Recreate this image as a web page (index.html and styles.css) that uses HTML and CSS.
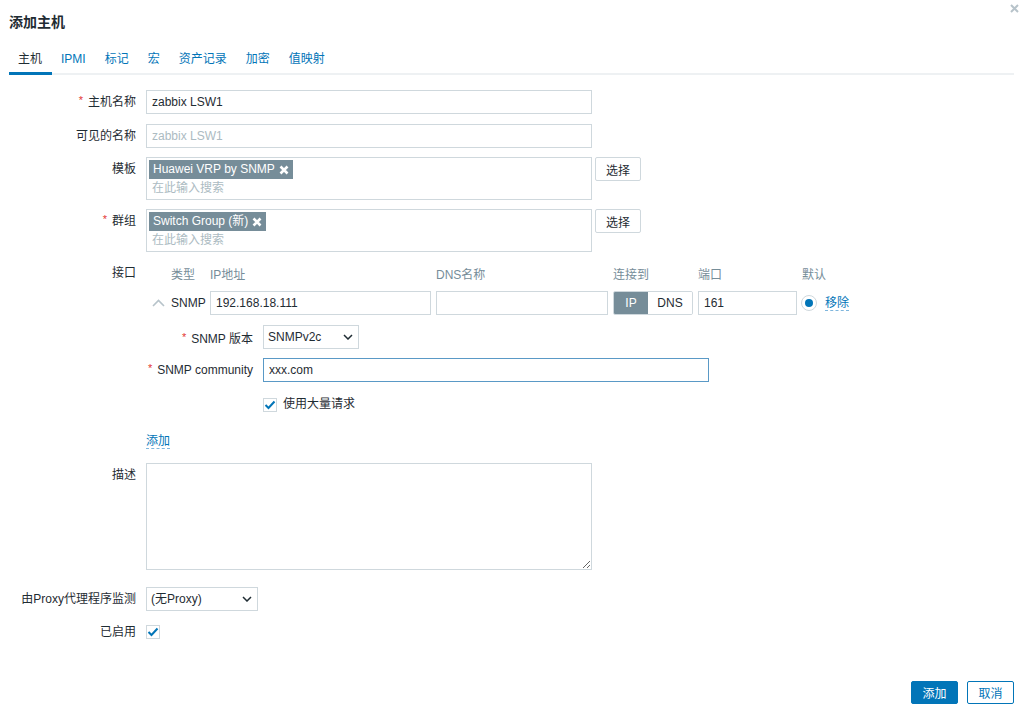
FILE: index.html
```html
<!DOCTYPE html>
<html lang="zh-CN">
<head>
    <meta charset="UTF-8">
    <meta name="viewport" content="width=device-width, initial-scale=1.0">
    <title>添加主机</title>
    <link rel="stylesheet" href="styles.css">
</head>
<body>
    <div class="dialog">
        <div class="dialog-head">
            <h4 class="dialog-title">添加主机</h4>
            <span class="dialog-close">
                <svg width="9" height="9" viewBox="0 0 9 9"><path d="M1 1L8 8M8 1L1 8" stroke="#b7c3ca" stroke-width="2"/></svg>
            </span>
        </div>

        <ul class="tabs">
            <li class="tab active">主机</li>
            <li class="tab">IPMI</li>
            <li class="tab">标记</li>
            <li class="tab">宏</li>
            <li class="tab">资产记录</li>
            <li class="tab">加密</li>
            <li class="tab">值映射</li>
        </ul>

        <div class="form">
            <div class="form-row first">
                <label class="form-label required">主机名称</label>
                <div class="form-field"><input class="text-input wide" type="text" value="zabbix LSW1"></div>
            </div>

            <div class="form-row">
                <label class="form-label">可见的名称</label>
                <div class="form-field"><input class="text-input wide" type="text" placeholder="zabbix LSW1"></div>
            </div>

            <div class="form-row">
                <label class="form-label">模板</label>
                <div class="form-field">
                    <div class="multiselect">
                        <span class="tag">Huawei VRP by SNMP
                            <svg width="10" height="10" viewBox="0 0 10 10"><path d="M1.5 1.5L8.5 8.5M8.5 1.5L1.5 8.5" stroke="#fff" stroke-width="2.6"/></svg>
                        </span>
                        <span class="ms-search">在此输入搜索</span>
                    </div>
                    <button class="btn-alt">选择</button>
                </div>
            </div>

            <div class="form-row">
                <label class="form-label required">群组</label>
                <div class="form-field">
                    <div class="multiselect">
                        <span class="tag">Switch Group (新)
                            <svg width="10" height="10" viewBox="0 0 10 10"><path d="M1.5 1.5L8.5 8.5M8.5 1.5L1.5 8.5" stroke="#fff" stroke-width="2.6"/></svg>
                        </span>
                        <span class="ms-search">在此输入搜索</span>
                    </div>
                    <button class="btn-alt">选择</button>
                </div>
            </div>

            <div class="form-row interfaces-row">
                <label class="form-label">接口</label>
                <div class="form-field interfaces">
                    <div class="iface-grid iface-head">
                        <span></span>
                        <span>类型</span>
                        <span>IP地址</span>
                        <span>DNS名称</span>
                        <span>连接到</span>
                        <span>端口</span>
                        <span>默认</span>
                    </div>
                    <div class="iface-grid iface-line">
                        <span class="chevron">
                            <svg width="13" height="8" viewBox="0 0 13 8"><path d="M1 7L6.5 1.5L12 7" fill="none" stroke="#b7c3ca" stroke-width="1.6"/></svg>
                        </span>
                        <span class="iface-type">SNMP</span>
                        <input class="text-input" type="text" value="192.168.18.111">
                        <input class="text-input" type="text" value="">
                        <div class="toggle">
                            <span class="toggle-opt on">IP</span>
                            <span class="toggle-opt">DNS</span>
                        </div>
                        <input class="text-input" type="text" value="161">
                        <div class="iface-default">
                            <span class="radio"><span class="radio-dot"></span></span>
                            <a class="link">移除</a>
                        </div>
                    </div>

                    <div class="snmp-details">
                        <div class="detail-row">
                            <label class="detail-label required">SNMP 版本</label>
                            <div class="select-wrap version">
                                <select class="select"><option>SNMPv2c</option></select>
                                <svg class="select-arrow" width="10" height="6" viewBox="0 0 10 6"><path d="M1 1L5 5L9 1" fill="none" stroke="#1f2c33" stroke-width="1.5"/></svg>
                            </div>
                        </div>
                        <div class="detail-row">
                            <label class="detail-label required">SNMP community</label>
                            <input class="text-input wide focused" type="text" value="xxx.com">
                        </div>
                        <div class="detail-row check-row">
                            <span class="detail-label"></span>
                            <span class="checkbox">
                                <svg width="12" height="10" viewBox="0 0 12 10"><path d="M1.5 5L4.5 8L10.5 1.5" fill="none" stroke="#0275b8" stroke-width="2"/></svg>
                            </span>
                            <span class="check-text">使用大量请求</span>
                        </div>
                    </div>
                </div>
            </div>

            <div class="form-row add-row">
                <span class="form-label"></span>
                <div class="form-field"><a class="link">添加</a></div>
            </div>

            <div class="form-row desc-row">
                <label class="form-label">描述</label>
                <div class="form-field"><textarea class="textarea"></textarea></div>
            </div>

            <div class="form-row">
                <label class="form-label">由Proxy代理程序监测</label>
                <div class="form-field">
                    <div class="select-wrap proxy">
                        <select class="select"><option>(无Proxy)</option></select>
                        <svg class="select-arrow" width="10" height="6" viewBox="0 0 10 6"><path d="M1 1L5 5L9 1" fill="none" stroke="#1f2c33" stroke-width="1.5"/></svg>
                    </div>
                </div>
            </div>

            <div class="form-row">
                <label class="form-label">已启用</label>
                <div class="form-field">
                    <span class="checkbox">
                        <svg width="12" height="10" viewBox="0 0 12 10"><path d="M1.5 5L4.5 8L10.5 1.5" fill="none" stroke="#0275b8" stroke-width="2"/></svg>
                    </span>
                </div>
            </div>
        </div>

        <div class="dialog-foot">
            <button class="btn-primary">添加</button>
            <button class="btn-cancel">取消</button>
        </div>
    </div>
</body>
</html>
```

FILE: styles.css
```css
* {
    margin: 0;
    padding: 0;
    box-sizing: border-box;
}

body {
    font-family: "Liberation Sans", Arial, "Noto Sans CJK SC", sans-serif;
    font-size: 12px;
    color: #1f2c33;
    background: #fff;
}

.dialog {
    width: 1024px;
    height: 712px;
    padding: 0 10px 8px 9px;
    display: flex;
    flex-direction: column;
}

.dialog-head {
    height: 45px;
    display: flex;
    justify-content: space-between;
    align-items: flex-start;
}

.dialog-title {
    margin-top: 13px;
    font-size: 14px;
    line-height: 18px;
    font-weight: bold;
    color: #1f2c33;
}

.dialog-close {
    margin: 4px -5px 0 0;
    display: flex;
}

/* tabs */
.tabs {
    list-style: none;
    display: flex;
    border-bottom: 2px solid #eef1f3;
}

.tab {
    padding: 7px 10px 6px 9px;
    line-height: 14px;
    color: #0275b8;
    border-bottom: 3px solid transparent;
    margin-bottom: -2px;
}

.tab.active {
    color: #1f2c33;
    border-bottom-color: #0275b8;
}

/* form */
.form {
    padding-top: 15px;
}

.form-row {
    display: flex;
    margin-bottom: 9px;
}

.form-row.first {
    margin-bottom: 10px;
}

.form-label {
    width: 127px;
    flex-shrink: 0;
    margin-right: 10px;
    text-align: right;
    line-height: 24px;
    white-space: nowrap;
}

.required::before {
    content: "*";
    color: #e33734;
    font-size: 11px;
    margin-right: 5px;
    position: relative;
    top: -2px;
}

.form-field {
    display: flex;
    align-items: flex-start;
}

.text-input {
    height: 24px;
    border: 1px solid #cfd8dd;
    padding: 0 5px;
    font: inherit;
    color: #1f2c33;
    background: #fff;
    outline: none;
    width: 100%;
}

.text-input.wide {
    width: 446px;
}

.text-input.focused {
    border-color: #5a99c6;
}

.text-input::placeholder {
    color: #acbbc2;
}

.multiselect {
    width: 446px;
    height: 43px;
    border: 1px solid #cfd8dd;
    padding: 2px;
    display: flex;
    flex-direction: column;
    align-items: flex-start;
}

.tag {
    height: 19px;
    line-height: 19px;
    padding: 0 4px;
    background: #768d99;
    color: #fff;
    display: inline-flex;
    align-items: center;
    gap: 4px;
    white-space: nowrap;
}

.ms-search {
    line-height: 19px;
    padding-left: 3px;
    color: #acbbc2;
}

.btn-alt {
    margin-left: 3px;
    width: 46px;
    height: 24px;
    border: 1px solid #cfd8dd;
    border-radius: 2px;
    background: #fff;
    font: inherit;
    color: #1f2c33;
}

/* interfaces */
.interfaces {
    flex-direction: column;
    padding-bottom: 6px;
}

.iface-grid {
    display: grid;
    grid-template-columns: 20px 34px 221px 172px 80px 99px auto;
    column-gap: 5px;
    align-items: center;
}

.iface-head {
    height: 24px;
    margin-bottom: 6px;
    color: #768d99;
}

.iface-line {
    height: 24px;
}

.chevron {
    display: flex;
    justify-content: center;
    padding-left: 5px;
}

.toggle {
    display: flex;
    height: 24px;
    border: 1px solid #cfd8dd;
    border-radius: 2px;
    overflow: hidden;
}

.toggle-opt {
    flex: 1;
    display: flex;
    align-items: center;
    justify-content: center;
    background: #fff;
}

.toggle-opt.on {
    flex: 0 0 34px;
    background: #768d99;
    color: #fff;
}

.iface-default {
    display: flex;
    align-items: center;
    gap: 8px;
    margin-left: -1px;
}

.radio {
    width: 16px;
    height: 16px;
    border: 1px solid #cfd8dd;
    border-radius: 50%;
    display: flex;
    align-items: center;
    justify-content: center;
}

.radio-dot {
    width: 8px;
    height: 8px;
    border-radius: 50%;
    background: #0275b8;
}

.link {
    color: #0275b8;
    border-bottom: 1px dashed #7fb6dd;
    line-height: 14px;
    cursor: pointer;
}

.snmp-details {
    margin-top: 10px;
}

.detail-row {
    display: flex;
    align-items: center;
    margin-bottom: 9px;
}

.detail-row.check-row {
    margin: -1px 0 0;
    height: 24px;
}

.detail-label {
    width: 107px;
    flex-shrink: 0;
    margin-right: 10px;
    text-align: right;
    white-space: nowrap;
}

.select-wrap {
    position: relative;
    height: 24px;
}

.select-wrap.version {
    width: 96px;
}

.select-wrap.proxy {
    width: 112px;
}

.select {
    appearance: none;
    width: 100%;
    height: 24px;
    border: 1px solid #cfd8dd;
    background: #fff;
    font: inherit;
    color: #1f2c33;
    padding: 0 4px;
    border-radius: 0;
}

.select-arrow {
    position: absolute;
    right: 6px;
    top: 9px;
}

.checkbox {
    width: 14px;
    height: 14px;
    border: 1px solid #cfd8dd;
    display: flex;
    align-items: center;
    justify-content: center;
    flex-shrink: 0;
}

.check-text {
    margin-left: 6px;
}

.form-field .checkbox {
    margin-top: 5px;
}

.add-row {
    margin-bottom: 10px;
}

.add-row .form-field {
    align-items: center;
    height: 24px;
}

.desc-row {
    margin-bottom: 17px;
}

.textarea {
    width: 446px;
    height: 107px;
    border: 1px solid #cfd8dd;
    font: inherit;
    resize: both;
}

/* footer */
.dialog-foot {
    margin-top: auto;
    display: flex;
    justify-content: flex-end;
    gap: 9px;
}

.btn-primary,
.btn-cancel {
    width: 47px;
    height: 23px;
    border-radius: 2px;
    font: inherit;
}

.btn-primary {
    background: #0275b8;
    border: 1px solid #0275b8;
    color: #fff;
}

.btn-cancel {
    background: #fff;
    border: 1px solid #0275b8;
    color: #0275b8;
}
```
